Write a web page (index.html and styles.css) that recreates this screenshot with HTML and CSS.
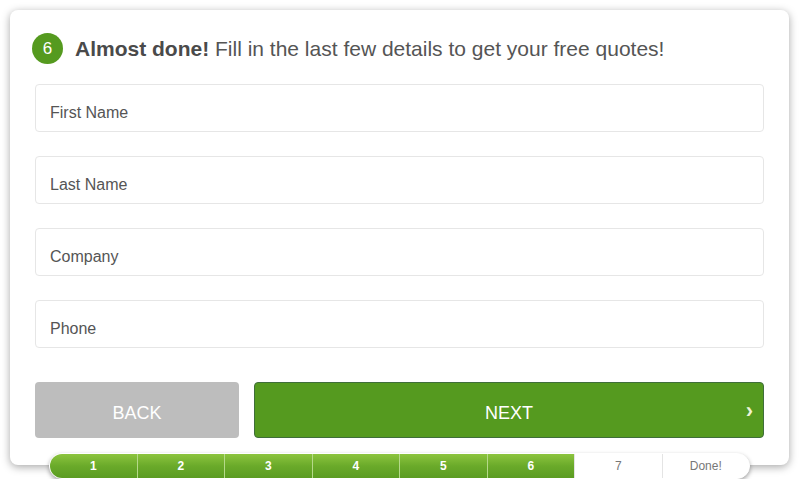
FILE: index.html
```html
<!DOCTYPE html>
<html lang="en">
<head>
  <meta charset="UTF-8" />
  <title>Get your free quotes</title>
  <link rel="stylesheet" href="styles.css">
</head>
<body>
  <div class="wrap">
    <div class="card">
      <h2 class="step-title"><span class="step-num">6</span><span><b>Almost done!</b> Fill in the last few details to get your free quotes!</span></h2>
      <div class="fields">
        <input type="text" placeholder="First Name" />
        <input type="text" placeholder="Last Name" />
        <input type="text" placeholder="Company" />
        <input type="text" placeholder="Phone" />
      </div>
      <div class="actions">
        <button class="btn btn-back">BACK</button>
        <button class="btn btn-next">NEXT<span class="chev">&#8250;</span></button>
      </div>
    </div>
    <div class="progress">
      <div class="seg done">1</div>
      <div class="seg done">2</div>
      <div class="seg done">3</div>
      <div class="seg done">4</div>
      <div class="seg done">5</div>
      <div class="seg done">6</div>
      <div class="seg">7</div>
      <div class="seg">Done!</div>
    </div>
  </div>
</body>
</html>
```

FILE: styles.css
```css
* { box-sizing: border-box; }
body {
  margin: 0;
  background: #fff;
  font-family: "Liberation Sans", Arial, sans-serif;
  color: #555;
}
.wrap {
  padding: 10px 11px 0 10px;
}
.card {
  background: #fff;
  border-radius: 8px;
  box-shadow: 0 2px 8px rgba(0,0,0,0.35);
  padding: 23px 25px 26px 25px;
  height: 455px;
}
.step-title {
  display: flex;
  align-items: center;
  gap: 12px;
  margin: 0 0 20px 0;
  font-size: 21px;
  font-weight: normal;
  color: #555;
  line-height: 30px;
}
.step-title b { color: #4a4a4a; }
.step-num {
  width: 31px;
  height: 31px;
  margin-left: -3px;
  border-radius: 50%;
  background: #559a1f;
  color: #fff;
  font-size: 17px;
  display: flex;
  align-items: center;
  justify-content: center;
}
.fields {
  display: flex;
  flex-direction: column;
  gap: 24px;
}
.fields input {
  height: 48px;
  border: 1px solid #e6e6e6;
  border-radius: 4px;
  padding: 10px 14px 0 14px;
  font-family: inherit;
  font-size: 16px;
  color: #555;
  outline: none;
}
.fields input::placeholder { color: #555; }
.actions {
  display: flex;
  gap: 15px;
  margin-top: 34px;
}
.btn {
  height: 56px;
  border-radius: 4px;
  border: none;
  padding-top: 7px;
  font-family: inherit;
  font-size: 18px;
  color: #fff;
  cursor: pointer;
  position: relative;
}
.btn-back {
  width: 204px;
  background: #bdbdbd;
}
.btn-next {
  flex: 1;
  background: #559a1f;
  border: 1px solid #3f6e3a;
}
.chev {
  position: absolute;
  right: 10px;
  top: 50%;
  transform: translateY(-45%);
  font-size: 22px;
  font-weight: bold;
  color: #eef3d6;
}
.progress {
  display: flex;
  width: 701px;
  height: 26px;
  margin: -12px 0 0 39px;
  position: relative;
  border: 1px solid #fff;
  border-radius: 13px;
  overflow: hidden;
  background: #fff;
  box-shadow: 0 2px 4px rgba(0,0,0,0.35);
}
.seg {
  flex: 1;
  display: flex;
  align-items: center;
  justify-content: center;
  font-size: 12px;
  color: #777;
  border-left: 1px solid #e4e4e4;
}
.seg:first-child { border-left: none; }
.seg.done {
  background: linear-gradient(to bottom, #8cc43e 0%, #6aaa2a 50%, #5b9c22 100%);
  color: #fff;
  font-weight: bold;
  border-left-color: #b5d98a;
}
```
